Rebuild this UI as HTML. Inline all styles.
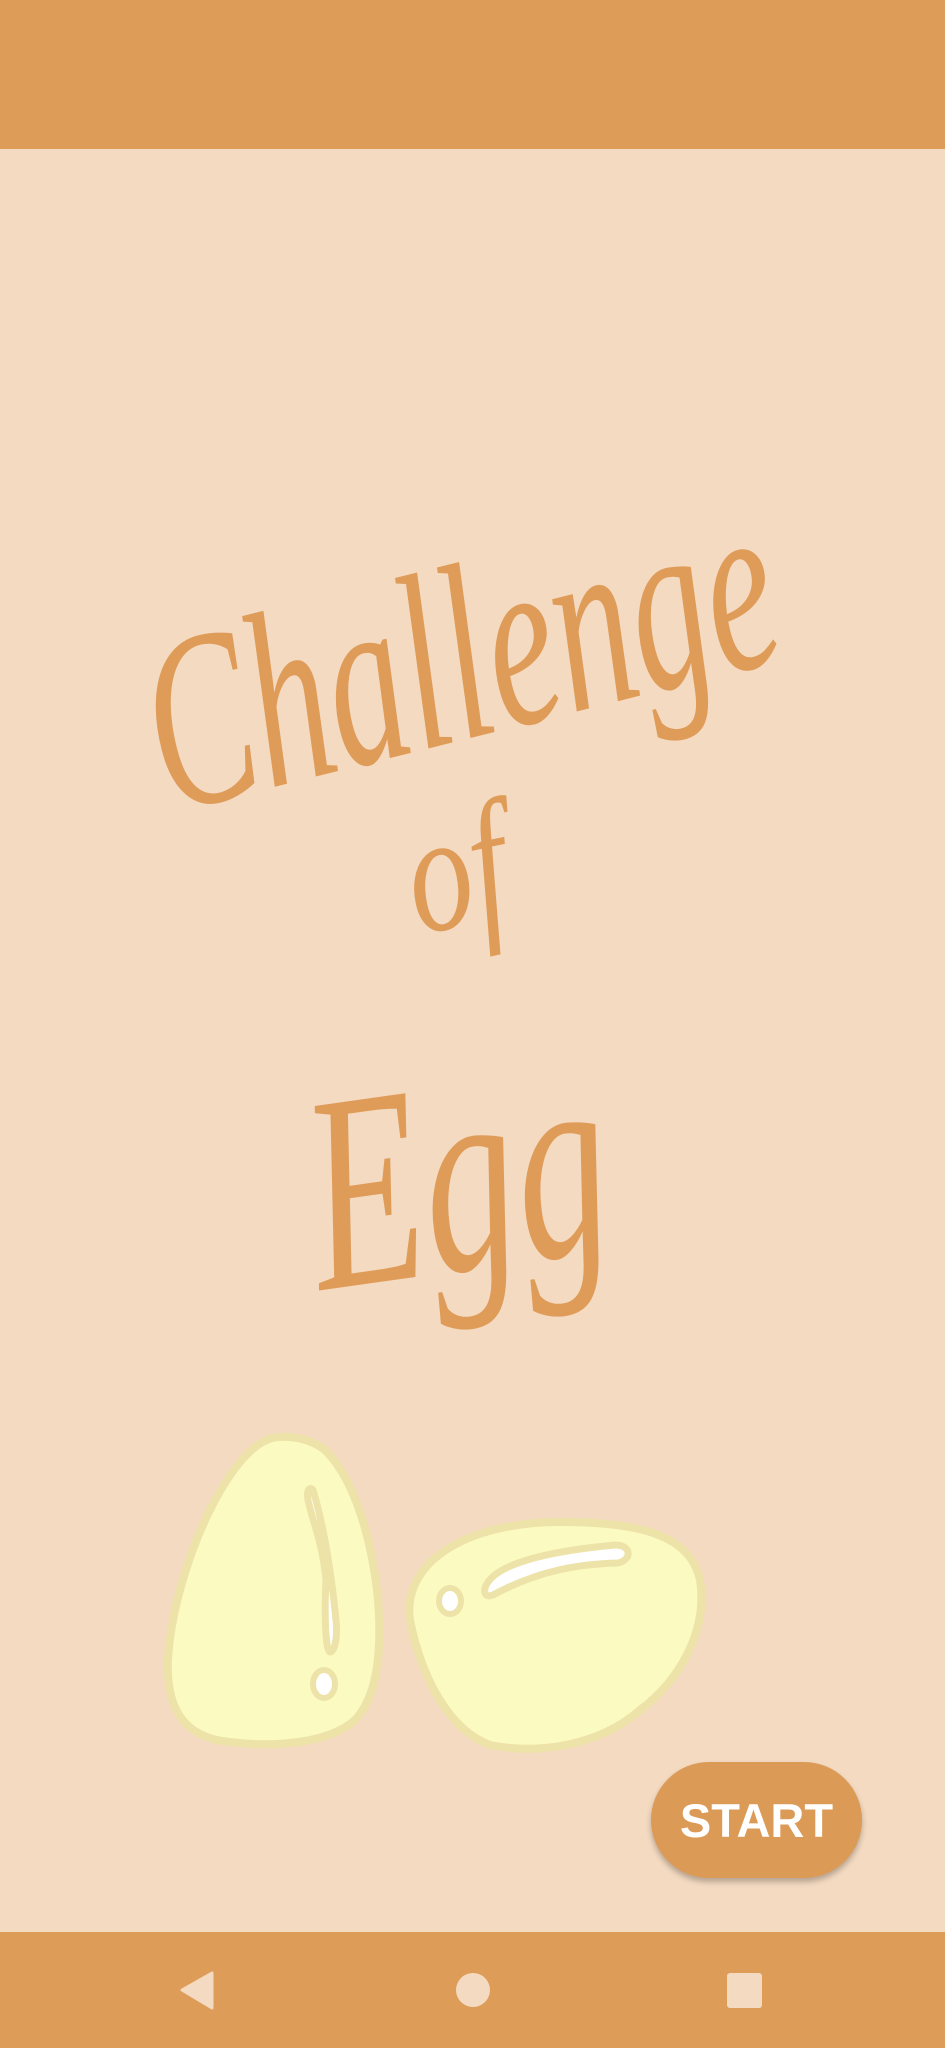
<!DOCTYPE html>
<html><head><meta charset="utf-8"><style>
html,body{margin:0;padding:0;width:945px;height:2048px;overflow:hidden;background:#f4dac1;}
.top{position:absolute;left:0;top:0;width:945px;height:149px;background:#de9c59;}
.nav{position:absolute;left:0;top:1932px;width:945px;height:116px;background:#de9c59;}
.btn{position:absolute;left:651px;top:1762px;width:211px;height:116px;border-radius:58px;background:#dc9a57;box-shadow:0 4px 6px rgba(0,0,0,0.25);color:#fff;font:bold 47px "Liberation Sans",sans-serif;display:flex;align-items:center;justify-content:center;}
svg{position:absolute;left:0;top:0;}
</style></head><body>
<div class="top"></div>
<div class="nav"></div>
<svg width="945" height="2048">
 <g fill="#df9c59" font-family="'Liberation Serif',serif" font-style="italic">
  <text x="135" y="740" font-size="250" textLength="640" lengthAdjust="spacingAndGlyphs" transform="rotate(-14 450 640)">Challenge</text>
  <text x="408" y="925" font-size="170" textLength="100" lengthAdjust="spacingAndGlyphs" transform="rotate(-12 460 880)">of</text>
  <text x="310" y="1270" font-size="280" textLength="300" lengthAdjust="spacingAndGlyphs" transform="rotate(-8 460 1200)">Egg</text>
 </g>
 <!-- egg 1 -->
 <path d="M280 1437 C255 1437 230 1470 210 1510 C185 1560 170 1620 168 1660 C166 1710 185 1738 230 1742 C280 1748 330 1742 355 1720 C378 1695 382 1650 378 1600 C372 1540 355 1480 325 1450 C312 1440 295 1436 280 1437Z" fill="#fbfbc1" stroke="#ede3a9" stroke-width="8"/>
 <path d="M313 1490 C322 1520 330 1560 336 1620 C338 1640 334 1652 330 1652 C326 1652 324 1620 326 1580 C322 1540 312 1520 308 1500 C306 1490 310 1486 313 1490Z" fill="#fff" stroke="#ede3a9" stroke-width="7"/>
 <ellipse cx="324" cy="1684" rx="11" ry="14" fill="#fff" stroke="#ede3a9" stroke-width="6"/>
 <!-- egg 2 -->
 <path d="M560 1522 C640 1522 690 1535 700 1580 C708 1630 680 1680 640 1710 C600 1745 540 1755 490 1745 C450 1730 422 1680 410 1620 C402 1560 470 1522 560 1522Z" fill="#fbfbc1" stroke="#ede3a9" stroke-width="8"/>
 <path d="M488 1582 C500 1565 540 1552 615 1545 C632 1545 632 1560 618 1563 C580 1564 540 1570 495 1594 C484 1600 482 1590 488 1582Z" fill="#fff" stroke="#ede3a9" stroke-width="7"/>
 <ellipse cx="450" cy="1601" rx="11" ry="13" fill="#fff" stroke="#ede3a9" stroke-width="6"/>
 <!-- nav icons -->
 <path d="M212 1973 L212 2008 L182 1990Z" fill="#f4dac1" stroke="#f4dac1" stroke-width="3" stroke-linejoin="round"/>
 <circle cx="473" cy="1990" r="17" fill="#f4dac1"/>
 <rect x="727" y="1973" width="35" height="35" rx="3" fill="#f4dac1"/>
</svg>
<div class="btn">START</div>
</body></html>
